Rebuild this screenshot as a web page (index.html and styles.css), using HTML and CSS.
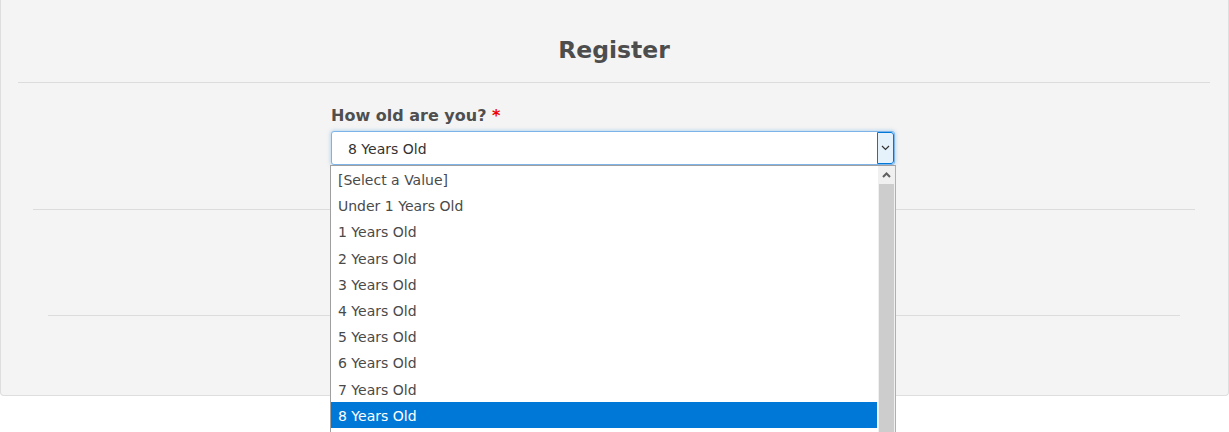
FILE: index.html
```html
<!DOCTYPE html>
<html lang="en">
<head>
  <meta charset="UTF-8">
  <title>Register</title>
  <meta name="viewport" content="width=device-width, initial-scale=1.0">
  <link rel="stylesheet" href="styles.css">
</head>
<body>
  <div class="panel">
    <div class="panel-head">
      <h2>Register</h2>
    </div>

    <div class="section">
      <div class="field-row">
        <div class="field">
          <label for="age">How old are you? <span class="req">*</span></label>
          <div class="select" id="age">
            <span class="select-value">8 Years Old</span>
            <span class="select-btn">
              <svg width="9" height="6" viewBox="0 0 9 6"><polyline points="1,1 4.5,4.5 8,1" fill="none" stroke="#333" stroke-width="1.2"/></svg>
            </span>
            <div class="options">
              <ul>
                <li>[Select a Value]</li>
                <li>Under 1 Years Old</li>
                <li>1 Years Old</li>
                <li>2 Years Old</li>
                <li>3 Years Old</li>
                <li>4 Years Old</li>
                <li>5 Years Old</li>
                <li>6 Years Old</li>
                <li>7 Years Old</li>
                <li class="selected">8 Years Old</li>
              </ul>
              <div class="scrollbar">
                <div class="scroll-up">
                  <svg width="9" height="6" viewBox="0 0 9 6"><polyline points="1,5 4.5,1.5 8,5" fill="none" stroke="#606060" stroke-width="2"/></svg>
                </div>
                <div class="scroll-thumb"></div>
              </div>
            </div>
          </div>
        </div>
      </div>

      <div class="actions"></div>
    </div>
  </div>
</body>
</html>
```

FILE: styles.css
```css
* {
  box-sizing: border-box;
}
body {
  margin: 0;
  min-height: 432px;
  background: #fff;
  font-family: "DejaVu Sans", Verdana, sans-serif;
  color: #444;
}
.panel {
  width: 1229px;
  height: 396px;
  background: #f4f4f4;
  border: 1px solid #dedede;
  border-top: none;
  border-radius: 0 0 4px 4px;
}
.panel-head {
  margin: 0 18px 0 17px;
  height: 83px;
  border-bottom: 1px solid #dcdcdc;
}
h2 {
  margin: 0;
  padding-top: 34px;
  text-align: center;
  font-size: 23.5px;
  line-height: 32px;
  color: #4d4d4d;
}
.section {
  margin: 0 33px 0 32px;
}
.field-row {
  height: 127px;
  border-bottom: 1px solid #dcdcdc;
}
.field {
  width: 564px;
  margin-left: 298px;
  padding-top: 23px;
  position: relative;
}
label {
  display: block;
  font-weight: bold;
  font-size: 16px;
  line-height: 20px;
  color: #4f4f4f;
  margin-bottom: 5px;
}
.req {
  color: #e00;
}
.select {
  position: relative;
  height: 34px;
  background: #fff;
  border: 1px solid #7eb4ea;
  border-radius: 3px;
  box-shadow: 0 0 4px rgba(0, 120, 215, 0.35);
  display: flex;
  align-items: center;
}
.select-value {
  flex: 1;
  padding-left: 16px;
  padding-top: 2px;
  font-size: 14px;
  color: #333;
}
.select-btn {
  width: 17px;
  height: 32px;
  background: #e5f1fb;
  border: 1px solid #0078d7;
  border-radius: 0 3px 3px 0;
  display: flex;
  align-items: center;
  justify-content: center;
}
.options {
  position: absolute;
  top: 33px;
  left: -2px;
  width: 566px;
  height: 267px;
  background: #fff;
  border: 1px solid #a0a0a0;
  border-right-color: #b0b0b0;
  border-bottom: none;
  display: flex;
}
.options ul {
  list-style: none;
  margin: 0;
  padding: 0;
  flex: 1;
}
.options li {
  height: 26.2px;
  line-height: 26px;
  padding: 1px 0 0 7px;
  font-size: 14px;
  color: #4a4a4a;
}
.options li.selected {
  background: #0078d7;
  color: #fff;
  margin-right: 1px;
}
.scrollbar {
  width: 17px;
  background: #f0f0f0;
  display: flex;
  flex-direction: column;
}
.scroll-up {
  height: 18px;
  display: flex;
  align-items: center;
  justify-content: center;
}
.scroll-thumb {
  flex: 1;
  margin: 0 1px;
  background: #cdcdcd;
}
.actions {
  margin: 0 15px;
  height: 106px;
  border-bottom: 1px solid #dcdcdc;
}
```
